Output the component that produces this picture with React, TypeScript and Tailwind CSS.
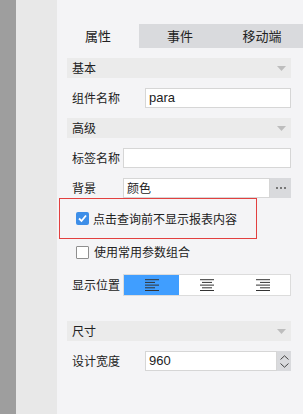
const cn = "font-['Noto_Sans_CJK_SC',sans-serif]";

function SectionHeader({ title }: { title: string }) {
  return (
    <div className="flex h-[20px] items-center justify-between bg-[#ebebeb] pl-[5px] pr-[5px]">
      <span className="text-[12px] leading-none text-[#222]">{title}</span>
      <svg width="9" height="5" viewBox="0 0 9 5">
        <path d="M0 0 L9 0 L4.5 5 Z" fill="#bdbdbd" />
      </svg>
    </div>
  );
}

function AlignIcon({ kind }: { kind: "left" | "center" | "right" }) {
  const long = [0, 14];
  const short =
    kind === "left" ? [0, 10] : kind === "center" ? [2, 12] : [4, 14];
  const rows = [long, short, long, short, long];
  return (
    <svg width="14" height="12" viewBox="0 0 14 12">
      {rows.map((r, i) => (
        <rect key={i} x={r[0]} y={i * 2.7 + 0.2} width={r[1] - r[0]} height="1" fill="#333" />
      ))}
    </svg>
  );
}

function Checkbox({ checked }: { checked: boolean }) {
  if (checked) {
    return (
      <span className="flex h-[13px] w-[13px] items-center justify-center rounded-[2px] bg-[#3d8ee8]">
        <svg width="11" height="11" viewBox="0 0 11 11">
          <path d="M2 5.5 L4.5 8 L9 2.5" stroke="#fff" strokeWidth="1.8" fill="none" />
        </svg>
      </span>
    );
  }
  return <span className="h-[13px] w-[13px] rounded-[1px] border border-[#8f8f8f] bg-white" />;
}

export default function App() {
  return (
    <div className={`flex h-[414px] w-[303px] ${cn} text-[12px] text-[#222]`}>
      <div className="w-[16px] bg-[#9e9e9e]" />
      <div className="w-[41px] bg-[#e8e8e8]" />
      <div className="flex flex-1 flex-col bg-[#f4f4f6] pt-[24px]">
        <div className="flex h-[24px] text-[13px]">
          <div className="flex w-[82px] items-center justify-center bg-[#f4f4f6]">属性</div>
          <div className="flex w-[82px] items-center justify-center bg-[#d9dadd]">事件</div>
          <div className="flex flex-1 items-center justify-center bg-[#d9dadd]">移动端</div>
        </div>

        <div className="ml-[10px] mr-[12px] mt-[10px] flex flex-col">
          <SectionHeader title="基本" />

          <div className="mt-[10px] flex h-[20px] items-center">
            <span className="w-[78px] pl-[5px]">组件名称</span>
            <div className="flex h-[20px] flex-1 items-center border border-[#d6d6d6] bg-white pl-[3px] font-['Liberation_Sans',sans-serif] text-[13px]">
              para
            </div>
          </div>

          <div className="mt-[10px]">
            <SectionHeader title="高级" />
          </div>

          <div className="mt-[10px] flex h-[20px] items-center">
            <span className="w-[56px] pl-[5px]">标签名称</span>
            <div className="h-[20px] flex-1 border border-[#d6d6d6] bg-white" />
          </div>

          <div className="mt-[10px] flex h-[20px] items-center">
            <span className="w-[56px] pl-[5px]">背景</span>
            <div className="flex h-[20px] flex-1 items-center border border-[#d6d6d6] bg-white pl-[3px] text-[12px]">
              颜色
            </div>
            <div className="flex h-[20px] w-[21px] items-center justify-center bg-[#d9dadd]">
              <svg width="10" height="2" viewBox="0 0 10 2">
                <rect x="0" y="0" width="2" height="2" fill="#777" />
                <rect x="4" y="0" width="2" height="2" fill="#777" />
                <rect x="8" y="0" width="2" height="2" fill="#777" />
              </svg>
            </div>
          </div>

          <div className="ml-[-8px] flex h-[41px] w-[198px] items-center gap-[4px] border border-[#e2403f] pl-[16px]">
            <Checkbox checked />
            <span>点击查询前不显示报表内容</span>
          </div>

          <div className="mt-[6px] flex h-[14px] items-center gap-[5px] pl-[9px]">
            <Checkbox checked={false} />
            <span>使用常用参数组合</span>
          </div>

          <div className="mt-[15px] flex h-[22px] items-center">
            <span className="w-[56px] pl-[5px]">显示位置</span>
            <div className="flex h-[22px] flex-1 border border-[#dcdcdc] bg-white">
              <div className="flex w-[55px] items-center justify-center bg-[#409eff]">
                <AlignIcon kind="left" />
              </div>
              <div className="flex w-[56px] items-center justify-center">
                <AlignIcon kind="center" />
              </div>
              <div className="flex flex-1 items-center justify-center">
                <AlignIcon kind="right" />
              </div>
            </div>
          </div>

          <div className="mt-[25px]">
            <SectionHeader title="尺寸" />
          </div>

          <div className="mt-[10px] flex h-[20px] items-center">
            <span className="w-[78px] pl-[5px]">设计宽度</span>
            <div className="flex h-[20px] flex-1 items-center border border-[#d6d6d6] bg-white pl-[3px] font-['Liberation_Sans',sans-serif] text-[13px]">
              960
            </div>
            <div className="flex h-[20px] w-[14px] flex-col items-center justify-center gap-[3px] bg-[#d9dadd]">
              <svg width="9" height="5" viewBox="0 0 9 5">
                <path d="M0.5 4.5 L4.5 0.8 L8.5 4.5" stroke="#444" strokeWidth="1" fill="none" />
              </svg>
              <svg width="9" height="5" viewBox="0 0 9 5">
                <path d="M0.5 0.5 L4.5 4.2 L8.5 0.5" stroke="#444" strokeWidth="1" fill="none" />
              </svg>
            </div>
          </div>
        </div>
      </div>
    </div>
  );
}
